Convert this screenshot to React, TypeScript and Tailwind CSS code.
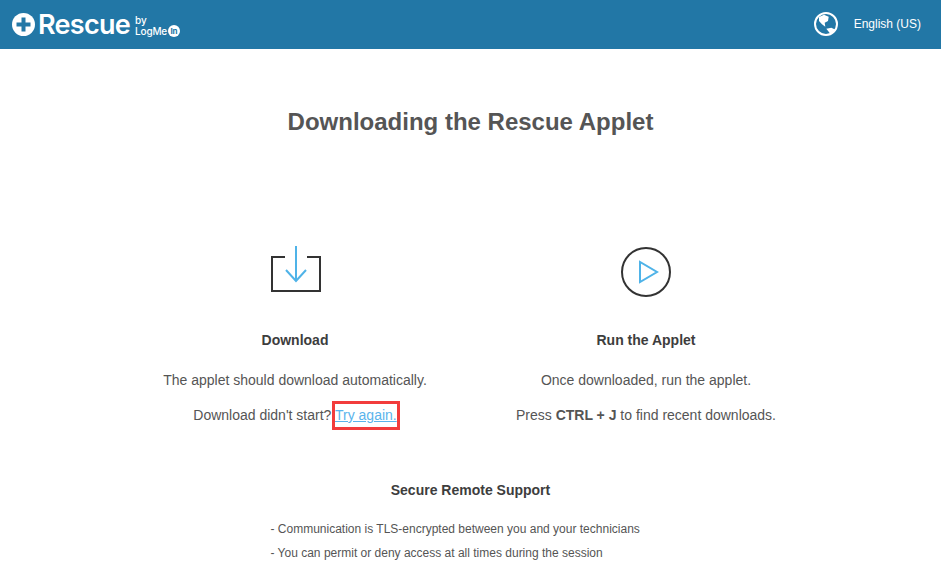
export default function App() {
  return (
    <div className="h-[576px] overflow-hidden bg-white font-['Liberation_Sans',Arial,sans-serif] text-[#555]">
      <header className="h-[49px] bg-[#2277a6] flex items-center justify-between pl-3 pr-5 text-white">
        <div className="flex items-center">
          <svg width="23" height="23" viewBox="0 0 23 23" className="mr-[3px]">
            <circle cx="11.5" cy="11.5" r="11.5" fill="#fff" />
            <path d="M9.5 4.5h4v5h5v4h-5v5h-4v-5h-5v-4h5z" fill="#2277a6" />
          </svg>
          <span className="font-['Inter',sans-serif] text-[27px] leading-none font-semibold tracking-[-0.7px]">Rescue</span>
          <div className="ml-[5px] mt-[4px] flex flex-col font-['Inter',sans-serif] text-[10px] leading-[11px] font-medium">
            <span className="leading-[9px]">by</span>
            <span className="flex items-center tracking-[-0.2px]">
              LogMe
              <span className="ml-px flex h-3 w-3 items-center justify-center rounded-full bg-white text-[8px] font-bold text-[#2277a6]">In</span>
            </span>
          </div>
        </div>
        <div className="flex items-center gap-4 -mt-px">
          <svg width="24" height="24" viewBox="0 0 24 24">
            <circle cx="12" cy="12" r="11" fill="none" stroke="#fff" strokeWidth="2" />
            <path d="M5 5 10 2.700 14.700 4.700 14 9 10.700 10.700 11.300 14.700 8 12.300 5 9zM12.300 16.700 17.300 15.700 21 17.500 19 20.500 16 21.500 14.500 19.500z" fill="#fff" />
          </svg>
          <span className="text-xs">English (US)</span>
        </div>
      </header>

      <main className="flex flex-col items-center">
        <h1 className="mt-[58px] text-2xl leading-[30px] font-bold">Downloading the Rescue Applet</h1>

        <div className="mt-[109px] grid w-[702px] grid-cols-2 text-sm text-center">
          <section className="flex flex-col items-center">
            <svg width="52" height="52" viewBox="0 0 52 52" className="mb-[32px]">
              <path d="M16 11H3v34h48V11H38" fill="none" stroke="#333" strokeWidth="2" />
              <path d="M27 0v35M17 24l10 11 10-11" fill="none" stroke="#4fb3e8" strokeWidth="2" />
            </svg>
            <h2 className="font-bold text-[#3d3d3d] leading-5">Download</h2>
            <p className="mt-5 leading-5">The applet should download automatically.</p>
            <p className="mt-[15px] leading-5">
              Download didn't start?{' '}
              <a href="#" className="relative text-[#5ab4ec] underline">
                Try again.
                <span className="absolute -inset-x-[3px] -top-[6px] -bottom-[7px] border-[3px] border-[#f23c3c]" />
              </a>
            </p>
          </section>
          <section className="flex flex-col items-center">
            <svg width="52" height="52" viewBox="0 0 52 52" className="mb-[32px]">
              <circle cx="26" cy="26" r="24" fill="none" stroke="#333" strokeWidth="2" />
              <path d="M20 16v20l17-10z" fill="none" stroke="#4fb3e8" strokeWidth="2" />
            </svg>
            <h2 className="font-bold text-[#3d3d3d] leading-5">Run the Applet</h2>
            <p className="mt-5 leading-5">Once downloaded, run the applet.</p>
            <p className="mt-[15px] leading-5">
              Press <b>CTRL + J</b> to find recent downloads.
            </p>
          </section>
        </div>

        <h3 className="mt-[55px] text-sm leading-5 font-bold text-[#3d3d3d]">Secure Remote Support</h3>
        <ul className="mt-[17px] w-[400px] text-xs leading-6">
          <li>- Communication is TLS-encrypted between you and your technicians</li>
          <li>- You can permit or deny access at all times during the session</li>
        </ul>
      </main>
    </div>
  )
}
